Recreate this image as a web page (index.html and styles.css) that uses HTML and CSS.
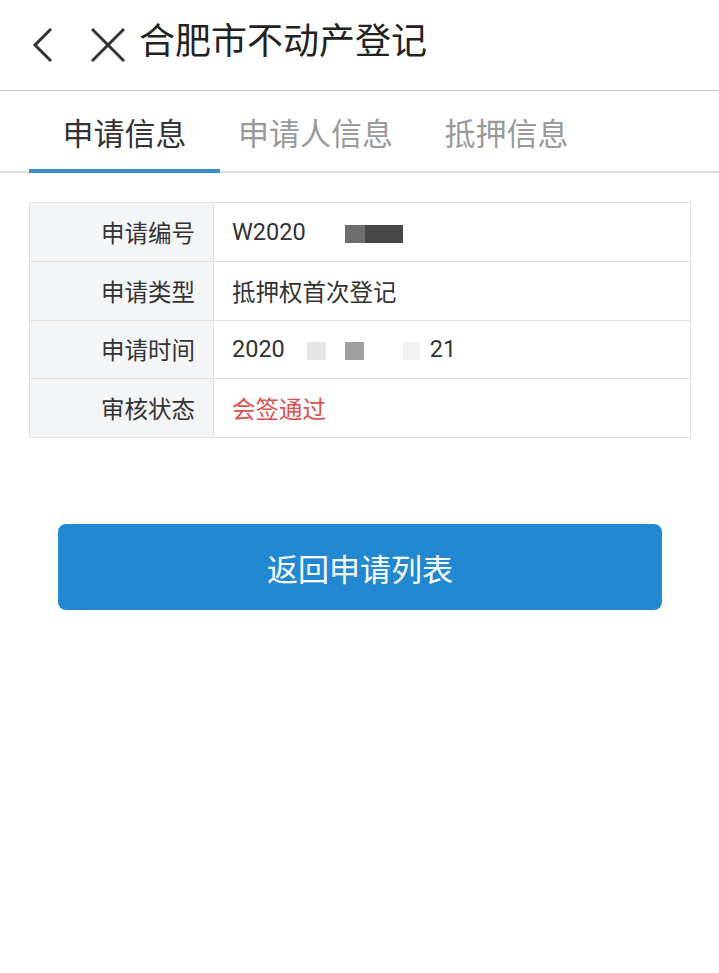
FILE: index.html
```html
<!DOCTYPE html>
<html lang="zh-CN">
  <head>
    <meta charset="UTF-8" />
    <meta name="viewport" content="width=device-width, initial-scale=1.0" />
    <title>合肥市不动产登记</title>
    <link rel="stylesheet" href="styles.css">
  </head>
  <body>
    <header class="topbar">
      <button class="iconButton back" aria-label="返回">
        <svg width="24" height="36" viewBox="0 0 24 36">
          <polyline points="20,2 4,18 20,34" fill="none" stroke="#333" stroke-width="3" />
        </svg>
      </button>
      <button class="iconButton close" aria-label="关闭">
        <svg width="36" height="36" viewBox="0 0 36 36">
          <line x1="2" y1="2" x2="34" y2="34" stroke="#333" stroke-width="3" />
          <line x1="34" y1="2" x2="2" y2="34" stroke="#333" stroke-width="3" />
        </svg>
      </button>
      <h1 class="title">合肥市不动产登记</h1>
    </header>

    <nav class="tabs">
      <a class="tab active">申请信息</a>
      <a class="tab">申请人信息</a>
      <a class="tab">抵押信息</a>
    </nav>

    <table class="infoTable">
      <tr>
        <th>申请编号</th>
        <td>W2020<span class="mask first"><i class="mid"></i><i class="dark"></i></span></td>
      </tr>
      <tr>
        <th>申请类型</th>
        <td>抵押权首次登记</td>
      </tr>
      <tr>
        <th>申请时间</th>
        <td class="timeCell">2020<i class="blk light one"></i><i class="blk mid two"></i><i class="blk faint three"></i>21</td>
      </tr>
      <tr>
        <th>审核状态</th>
        <td class="status">会签通过</td>
      </tr>
    </table>

    <div class="actions">
      <button class="backButton">返回申请列表</button>
    </div>
  </body>
</html>
```

FILE: styles.css
```css
body {
  margin: 0;
  background: #fff;
  color: #333;
  font-family: Roboto, "Noto Sans CJK SC", sans-serif;
}
.topbar {
  display: flex;
  align-items: center;
  height: 91px;
  border-bottom: 1px solid #cbcbcb;
  box-sizing: border-box;
}
.iconButton {
  border: none;
  background: none;
  padding: 0;
  display: flex;
}
.back {
  margin-left: 31px;
}
.close {
  margin-left: 35px;
}
.title {
  margin: 0 0 0 13px;
  font-size: 36px;
  font-weight: normal;
  color: #222;
  line-height: 1;
  padding-bottom: 6px;
}
.tabs {
  display: flex;
  height: 82px;
  padding-left: 29px;
  border-bottom: 2px solid #dedede;
  box-sizing: border-box;
}
.tab {
  width: 191px;
  display: flex;
  align-items: center;
  justify-content: center;
  font-size: 31px;
  color: #9a9a9a;
  margin-bottom: -2px;
  border-bottom: 4px solid transparent;
  padding-top: 2px;
  box-sizing: border-box;
}
.tab.active {
  color: #333;
  border-bottom-color: #3b8dc9;
}
.infoTable {
  margin: 29px 28px 0 29px;
  width: calc(100% - 57px);
  border-collapse: collapse;
  font-size: 23.5px;
}
.infoTable th,
.infoTable td {
  border: 1px solid #e0e0e0;
  height: 58.8px;
  font-weight: normal;
  box-sizing: border-box;
}
.infoTable th {
  width: 184px;
  padding: 0 18px 0 20px;
  text-align: right;
  background: #f4f5f7;
  color: #333;
}
.infoTable td {
  padding: 0 18px;
  text-align: left;
  color: #333;
}
.mask {
  display: inline-flex;
  vertical-align: middle;
  margin-left: 39px;
}
.mask i {
  display: block;
  height: 18px;
}
.mask .mid {
  width: 20px;
  background: #6e6e6e;
}
.mask .dark {
  width: 38px;
  background: #474747;
}
.blk {
  display: inline-block;
  width: 19px;
  height: 18px;
  vertical-align: middle;
}
.blk.light {
  background: #e6e6e6;
}
.blk.mid {
  background: #a0a0a0;
}
.blk.faint {
  background: #f2f2f2;
  width: 17px;
}
.blk.one {
  margin-left: 22px;
}
.blk.two {
  margin-left: 19px;
}
.blk.three {
  margin-left: 39px;
  margin-right: 10px;
}
.status {
  color: #d9534f !important;
}
.actions {
  padding: 86px 57px 0 58px;
}
.backButton {
  width: 100%;
  height: 86px;
  border: none;
  border-radius: 8px;
  background: #2288d1;
  color: #fff;
  font-size: 31px;
  font-family: Roboto, "Noto Sans CJK SC", sans-serif;
  cursor: pointer;
}
```
